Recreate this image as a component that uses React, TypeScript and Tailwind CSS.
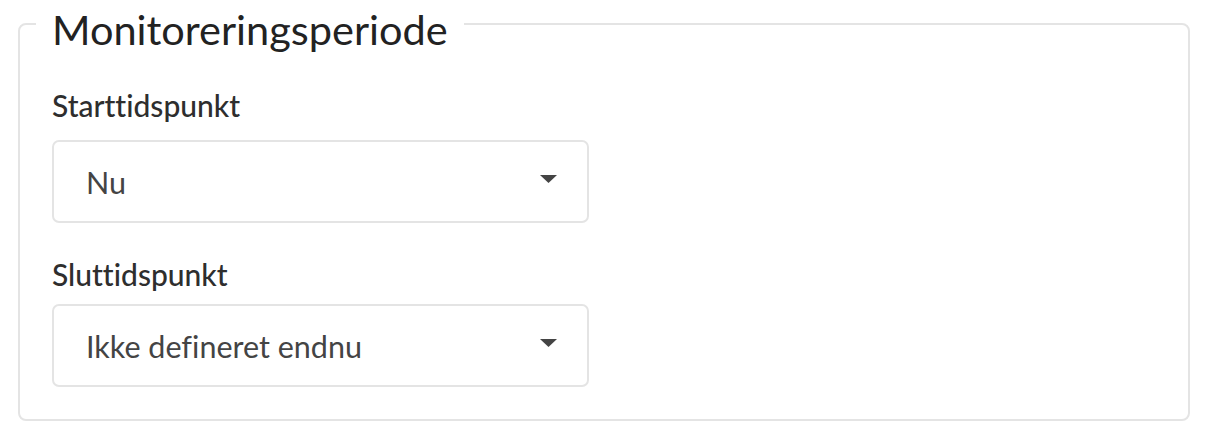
import { useState } from "react";

type Option = { value: string; label: string };

const startOptions: Option[] = [
  { value: "now", label: "Nu" },
  { value: "later", label: "Senere" },
];

const endOptions: Option[] = [
  { value: "undefined", label: "Ikke defineret endnu" },
  { value: "date", label: "Vælg dato" },
];

function SelectField({
  label,
  options,
  value,
  onChange,
  labelClass,
}: {
  label: string;
  options: Option[];
  value: string;
  onChange: (v: string) => void;
  labelClass: string;
}) {
  const current = options.find((o) => o.value === value) ?? options[0];

  return (
    <div className="flex flex-col">
      <label className={`text-[30px] leading-[36px] font-medium text-[#2e2e2e] ${labelClass}`}>
        {label}
      </label>
      <div className="relative w-[537px] h-[83px] rounded-[7px] border-2 border-[#e4e4e4] bg-white flex items-center pl-[32px] pr-[30px]">
        <span className="flex-1 text-[30.5px] leading-[36px] text-[#444444]">{current.label}</span>
        <svg width="17" height="8" viewBox="0 0 17 8" className="mb-[5px]">
          <path d="M0 0 L17 0 L8.5 8 Z" fill="#444444" />
        </svg>
        {/* native select on top so it still works */}
        <select
          value={value}
          onChange={(e) => onChange(e.target.value)}
          className="absolute inset-0 opacity-0 cursor-pointer"
        >
          {options.map((o) => (
            <option key={o.value} value={o.value}>
              {o.label}
            </option>
          ))}
        </select>
      </div>
    </div>
  );
}

export default function App() {
  const [start, setStart] = useState("now");
  const [end, setEnd] = useState("undefined");

  return (
    <div
      className="w-[1210px] h-[432px] bg-white pl-[18px] pr-[20px] [font-variant-ligatures:none]"
      style={{ fontFamily: "Lato, 'Noto Sans', sans-serif" }}
    >
      {/* ================= MONITORERINGSPERIODE ================= */}
      <fieldset className="border-2 border-[#e4e4e4] rounded-[8px] pl-[32px] pb-[32px]">
        <legend className="-ml-[16px] px-[16px] pt-[10px] text-[41.5px] leading-[38px] text-[#222222]">
          Monitoreringsperiode
        </legend>

        <div className="mt-[39px]">
          <SelectField
            label="Starttidspunkt"
            options={startOptions}
            value={start}
            onChange={setStart}
            labelClass="mb-[17px]"
          />
        </div>

        <div className="mt-[33px]">
          <SelectField
            label="Sluttidspunkt"
            options={endOptions}
            value={end}
            onChange={setEnd}
            labelClass="mb-[12px]"
          />
        </div>
      </fieldset>
    </div>
  );
}
